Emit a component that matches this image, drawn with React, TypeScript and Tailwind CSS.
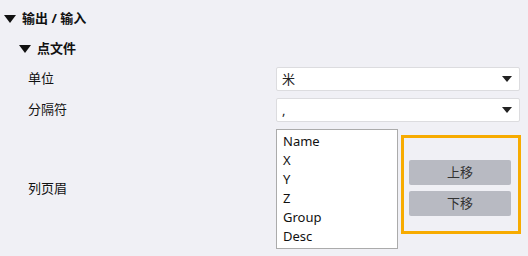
import React from "react";

const font = {
  fontFamily: '"Noto Sans", "Noto Sans CJK SC", sans-serif',
};

function Caret({ className }: { className?: string }) {
  return (
    <svg viewBox="0 0 12 8" className={className}>
      <path d="M0 0 H12 L6 8 Z" fill="#111" />
    </svg>
  );
}

function Combo({ value }: { value: string }) {
  return (
    <div className="flex h-[24px] w-[244px] items-center justify-between rounded-[2px] border border-[#dcdcdf] bg-white pl-[5px] pr-[7px] text-[13px] text-[#222]">
      <span className="leading-none">{value}</span>
      <svg viewBox="0 0 10 6" className="h-[6px] w-[10px]">
        <path d="M0 0 H10 L5 6 Z" fill="#222" />
      </svg>
    </div>
  );
}

const columns = ["Name", "X", "Y", "Z", "Group", "Desc"];

export default function App() {
  return (
    <div
      className="h-[256px] w-[528px] overflow-hidden bg-[#f0f0f5] text-[#111]"
      style={font}
    >
      <div className="flex h-[36px] items-center pt-[1px] pl-[4px]">
        <Caret className="h-[8px] w-[12px]" />
        <span className="ml-[6px] text-[13px] font-bold">输出 / 输入</span>
      </div>
      <div className="flex h-[24px] items-center pt-[2px] pl-[19px]">
        <Caret className="h-[8px] w-[12px]" />
        <span className="ml-[6px] text-[13px] font-bold">点文件</span>
      </div>

      <div className="mt-[7px] grid grid-cols-[248px_1fr] gap-y-[7px] pl-[28px] text-[13px]">
        <div className="flex items-center">单位</div>
        <Combo value="米" />

        <div className="flex items-center">分隔符</div>
        <Combo value="," />

        <div className="flex items-center">列页眉</div>
        <div className="flex items-start gap-[3px]">
          <ul className="h-[120px] w-[122px] border border-[#ababab] bg-white pt-[2px] pl-[6px] text-[13px] leading-[19px] text-[#111]">
            {columns.map((c) => (
              <li key={c}>{c}</li>
            ))}
          </ul>
          <div className="mt-[6px] flex h-[99px] w-[120px] flex-col gap-[6px] border-[3px] border-[#f7ab00] pt-[22px] pl-[5px]">
            <button className="h-[25px] w-[102px] rounded-[2px] bg-[#b8bac2] text-[13px] text-[#333]">
              上移
            </button>
            <button className="h-[25px] w-[102px] rounded-[2px] bg-[#b8bac2] text-[13px] text-[#333]">
              下移
            </button>
          </div>
        </div>
      </div>
    </div>
  );
}
